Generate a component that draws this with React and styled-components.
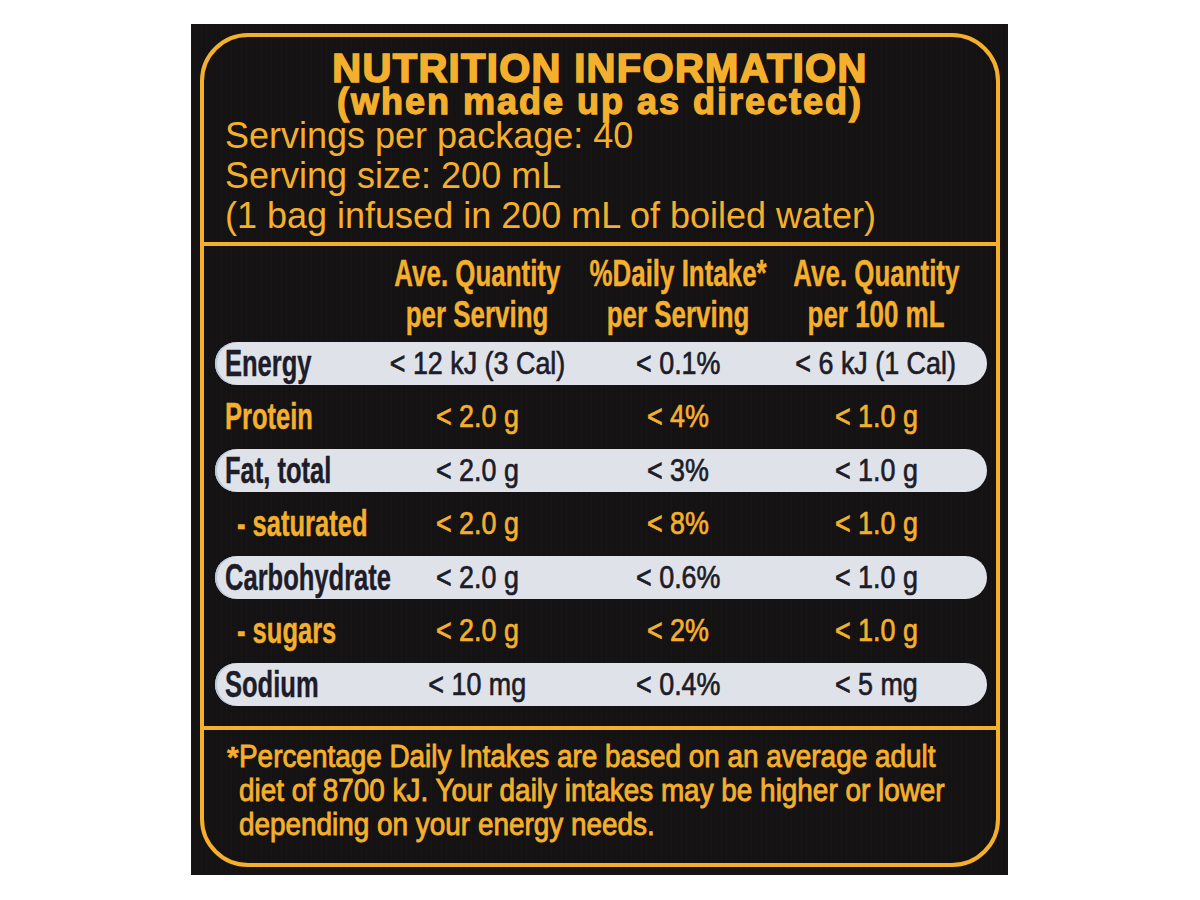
import React from "react";
import styled, { createGlobalStyle } from "styled-components";

const GOLD = "#f4b02c";
const INK = "#1d1c28";
const FONT = `"Liberation Sans", Arial, Helvetica, sans-serif`;

const GlobalStyle = createGlobalStyle`
  html, body { margin: 0; padding: 0; background: #ffffff; }
  body { font-family: ${FONT}; }
  * { box-sizing: border-box; }
`;

const Page = styled.div`
  width: 1200px;
  height: 900px;
  padding: 24px 0 0 191px;
  display: flex;
  align-items: flex-start;
`;

const Panel = styled.div`
  width: 817px;
  height: 851px;
  padding: 9px 8px 8px 9px;
  background:
    repeating-linear-gradient(90deg, rgba(255,255,255,0.012) 0 1px, transparent 1px 5px),
    #151213;
`;

const Frame = styled.div`
  height: 100%;
  border: 4px solid ${GOLD};
  border-radius: 48px;
  display: flex;
  flex-direction: column;
  overflow: hidden;
  color: ${GOLD};
  font-family: ${FONT};
`;

const Intro = styled.section`
  padding: 12px 0 6px 0;
  border-bottom: 4px solid ${GOLD};
`;

const Title = styled.h1`
  margin: 0;
  font: 700 40px/38px ${FONT};
  letter-spacing: 1.3px;
  text-align: center;
  -webkit-text-stroke: 1.6px ${GOLD};
`;

const Subtitle = styled.h2`
  margin: 0;
  font: 700 36px/30px ${FONT};
  letter-spacing: 2px;
  text-align: center;
  -webkit-text-stroke: 1.3px ${GOLD};
`;

const Info = styled.div`
  margin-top: -1.5px;
  padding-left: 21px;
  font: 400 36px/40px ${FONT};
  white-space: nowrap;
`;

const Table = styled.section`
  padding: 7px 9px 20px 11px;
  border-bottom: 4px solid ${GOLD};
  display: flex;
  flex-direction: column;
`;

const Grid = styled.div`
  display: grid;
  grid-template-columns: 162px 200px 202px 194px;
  padding-right: 14px;
`;

const HeadRow = styled(Grid)`
  margin-bottom: 7px;
`;

const Rows = styled.div`
  display: flex;
  flex-direction: column;
  gap: 10.5px;
`;

const Row = styled(Grid)`
  height: 43px;
  border-radius: 22px;
  background: ${(p) => (p.$shaded ? "#dfe3e9" : "transparent")};
  box-shadow: ${(p) => (p.$shaded ? "inset 2px 0 0 #b9c7da" : "none")};
  color: ${(p) => (p.$shaded ? INK : GOLD)};
`;

const HeadCell = styled.div`
  display: flex;
  flex-direction: column;
  align-items: center;
  font: 700 36px/41px ${FONT};
  -webkit-text-stroke: 0.4px ${GOLD};
`;

const LabelCell = styled.div`
  display: flex;
  align-items: center;
  padding-left: ${(p) => 10 + (p.$indent ? 12 : 0)}px;
  font: 700 37px/43px ${FONT};
  -webkit-text-stroke: 0.4px currentColor;
`;

const ValueCell = styled.div`
  display: flex;
  justify-content: center;
  align-items: center;
  font: 400 32px/43px ${FONT};
  -webkit-text-stroke: 0.7px currentColor;
`;

const Cond = styled.span`
  display: inline-block;
  white-space: nowrap;
  transform: scaleX(${(p) => p.$scale});
  transform-origin: ${(p) => p.$origin || "center"} center;
`;

const Footnote = styled.section`
  flex: 1;
  display: flex;
  padding: 10px 0 0 23px;
  color: ${GOLD};
`;

const Star = styled.div`
  width: 15px;
  color: ${GOLD};
  font: 700 30px/34px ${FONT};
  -webkit-text-stroke: 0.5px ${GOLD};
`;

const NoteLines = styled.div`
  display: flex;
  flex-direction: column;
  font: 400 31px/34px ${FONT};
  -webkit-text-stroke: 0.9px ${GOLD};
`;

const heads = [
  ["Ave. Quantity", "per Serving"],
  ["%Daily Intake*", "per Serving"],
  ["Ave. Quantity", "per 100 mL"],
];

const rows = [
  { label: "Energy", shaded: true, v: ["< 12 kJ (3 Cal)", "< 0.1%", "< 6 kJ (1 Cal)"] },
  { label: "Protein", v: ["< 2.0 g", "< 4%", "< 1.0 g"] },
  { label: "Fat, total", shaded: true, v: ["< 2.0 g", "< 3%", "< 1.0 g"] },
  { label: "- saturated", indent: true, v: ["< 2.0 g", "< 8%", "< 1.0 g"] },
  { label: "Carbohydrate", shaded: true, v: ["< 2.0 g", "< 0.6%", "< 1.0 g"] },
  { label: "- sugars", indent: true, v: ["< 2.0 g", "< 2%", "< 1.0 g"] },
  { label: "Sodium", shaded: true, v: ["< 10 mg", "< 0.4%", "< 5 mg"] },
];

const note = [
  "Percentage Daily Intakes are based on an average adult",
  "diet of 8700 kJ. Your daily intakes may be higher or lower",
  "depending on your energy needs.",
];

export default function App() {
  return (
    <>
      <GlobalStyle />
      <Page>
        <Panel>
          <Frame>
            <Intro>
              <Title>NUTRITION INFORMATION</Title>
              <Subtitle>(when made up as directed)</Subtitle>
              <Info>
                <div>Servings per package: 40</div>
                <div>Serving size: 200 mL</div>
                <div>(1 bag infused in 200 mL of boiled water)</div>
              </Info>
            </Intro>
            <Table>
              <HeadRow>
                <div />
                {heads.map((h, i) => (
                  <HeadCell key={i}>
                    {h.map((line, j) => (
                      <Cond key={j} $scale={0.72}>
                        {line}
                      </Cond>
                    ))}
                  </HeadCell>
                ))}
              </HeadRow>
              <Rows>
                {rows.map((r) => (
                  <Row key={r.label} $shaded={r.shaded}>
                    <LabelCell $indent={r.indent}>
                      <Cond $scale={0.69} $origin="left">
                        {r.label}
                      </Cond>
                    </LabelCell>
                    {r.v.map((val, i) => (
                      <ValueCell key={i}>
                        <Cond $scale={0.84}>{val}</Cond>
                      </ValueCell>
                    ))}
                  </Row>
                ))}
              </Rows>
            </Table>
            <Footnote>
              <Star>*</Star>
              <NoteLines>
                {note.map((line) => (
                  <Cond key={line} $scale={0.9} $origin="left">
                    {line}
                  </Cond>
                ))}
              </NoteLines>
            </Footnote>
          </Frame>
        </Panel>
      </Page>
    </>
  );
}
